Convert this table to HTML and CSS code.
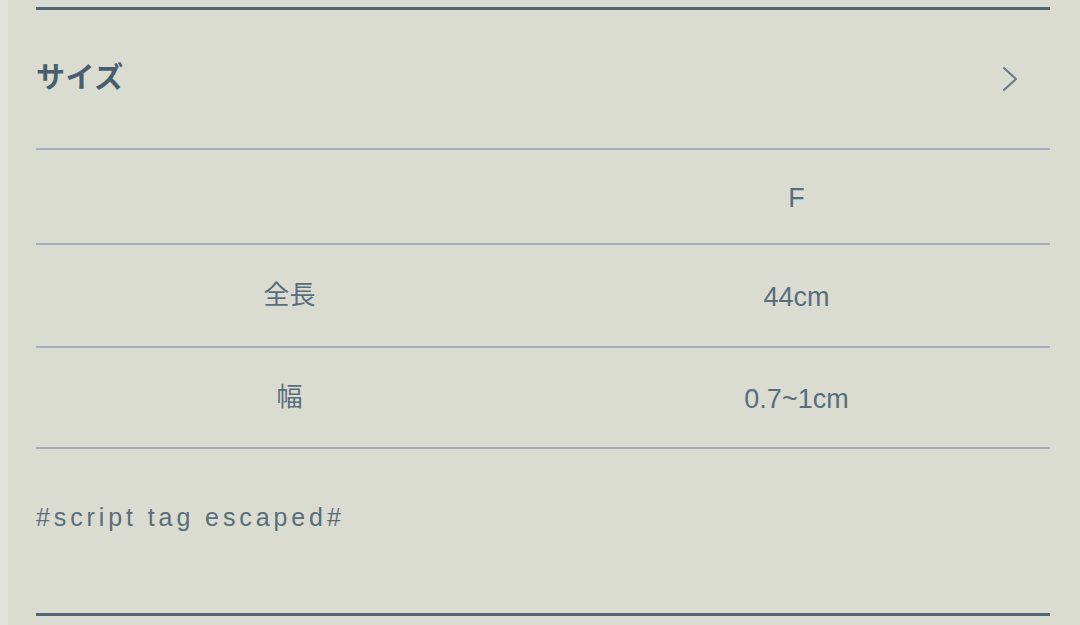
FILE: index.html
```html
<!DOCTYPE html>
<html lang="ja">
<head>
<meta charset="utf-8">
<title>サイズ</title>
<link rel="stylesheet" href="styles.css">
</head>
<body>
<div class="page">
  <section class="section">
    <div class="head">
      <h2 class="title">サイズ</h2>
      <svg class="chev" width="16" height="26" viewBox="0 0 16 26" aria-hidden="true">
        <polyline points="2,2 14,13 2,24" fill="none" stroke="#6b7680" stroke-width="2" stroke-linecap="round" stroke-linejoin="round"/>
      </svg>
    </div>
    <div class="table">
      <div class="row r1"><div class="cell jp"></div><div class="cell num">F</div></div>
      <div class="row r2"><div class="cell jp">全長</div><div class="cell num">44cm</div></div>
      <div class="row r3"><div class="cell jp">幅</div><div class="cell num">0.7~1cm</div></div>
    </div>
    <p class="note">#script tag escaped#</p>
  </section>
</div>
</body>
</html>
```

FILE: styles.css
```css
html, body {
  margin: 0;
  padding: 0;
}
body {
  background: #e1e2da;
  width: 1080px;
  height: 625px;
  overflow: hidden;
}
.page {
  margin-left: 8px;
  height: 625px;
  background: #dadcd2;
  padding: 7px 30px 0 28px;
  box-sizing: border-box;
}
.section {
  border-top: 3px solid #56636e;
  border-bottom: 3px solid #56636e;
}
.head {
  height: 138px;
  box-sizing: border-box;
  padding-bottom: 8px;
  display: flex;
  align-items: center;
  justify-content: space-between;
}
.title {
  margin: 0;
  font-family: "Noto Sans CJK JP", "Liberation Sans", sans-serif;
  font-weight: 700;
  font-size: 29px;
  line-height: 1;
  color: #4a5d6c;
  letter-spacing: 0.5px;
}
.chev {
  margin-right: 32px;
  margin-top: 8px;
}
.table {
  border-bottom: 2px solid #a7aeb6;
}
.row {
  display: grid;
  grid-template-columns: 1fr 1fr;
  align-items: center;
  border-top: 2px solid #a7aeb6;
  box-sizing: border-box;
}
.r1 { height: 95px; }
.r2 { height: 103px; }
.r3 { height: 101px; }
.cell {
  text-align: center;
  color: #5a6d7a;
  line-height: 32px;
}
.jp {
  font-family: "Noto Sans CJK JP", sans-serif;
  font-size: 26px;
  font-weight: 400;
  padding-bottom: 6px;
}
.num {
  font-family: "Liberation Sans", Arial, sans-serif;
  font-size: 27px;
  font-weight: 400;
  padding-top: 2px;
}
.note {
  margin: 0;
  height: 164px;
  box-sizing: border-box;
  padding-top: 52px;
  font-family: "Liberation Sans", Arial, sans-serif;
  font-size: 25px;
  line-height: 32px;
  letter-spacing: 3.9px;
  color: #5a6d7a;
}
```
